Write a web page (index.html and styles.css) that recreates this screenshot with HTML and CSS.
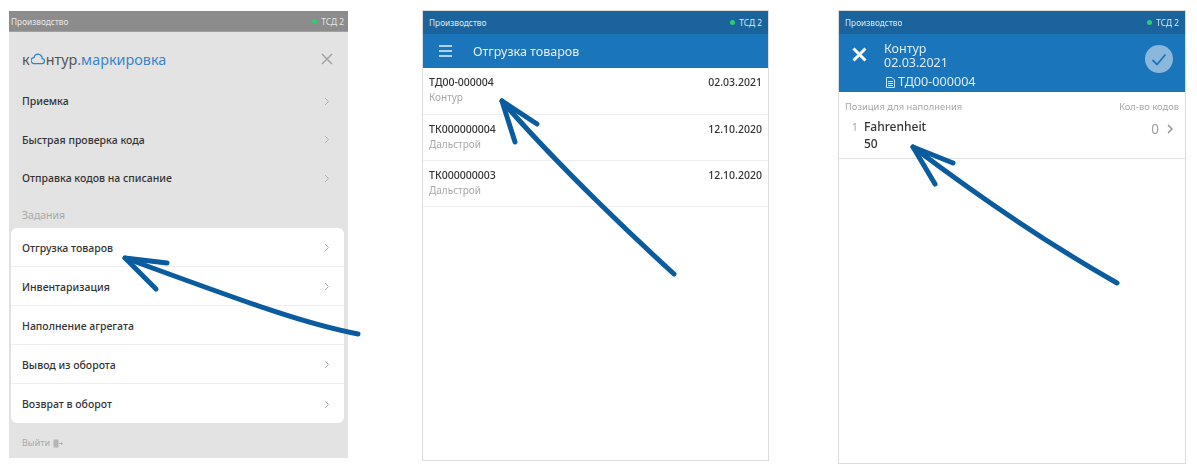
FILE: index.html
```html
<!DOCTYPE html>
<html lang="ru">
<head>
<meta charset="utf-8">
<title>Контур.Маркировка</title>
<link rel="stylesheet" href="styles.css">
</head>
<body>
<main class="stage">
  <section class="phone phone-menu">
    <div class="status status-gray"><span>Производство</span><span class="device"><i class="dot"></i>ТСД 2</span></div>
    <header class="brand">
      <div class="logo"><span>к</span><svg class="cloud" width="14" height="12" viewBox="0 0 14 12"><path d="M3.2 10.6h7.6a2.5 2.5 0 0 0 .4-5A4.3 4.3 0 0 0 7 1.2 4.2 4.2 0 0 0 3 4.6a3 3 0 0 0 .2 6z" fill="none" stroke="#2f86c9" stroke-width="1.3"/></svg><span>нтур</span><span class="logo-blue">.маркировка</span></div>
      <svg class="close-gray" width="12" height="12" viewBox="0 0 12 12"><path d="M1 1l10 10M11 1L1 11" stroke="#a3a3a3" stroke-width="1.5" fill="none"/></svg>
    </header>
    <ul class="menu">
      <li class="menu-row">Приемка<svg class="chev" width="6" height="9" viewBox="0 0 6 9"><path d="M1 1l3.5 3.5L1 8"/></svg></li>
      <li class="menu-row">Быстрая проверка кода<svg class="chev" width="6" height="9" viewBox="0 0 6 9"><path d="M1 1l3.5 3.5L1 8"/></svg></li>
      <li class="menu-row">Отправка кодов на списание<svg class="chev" width="6" height="9" viewBox="0 0 6 9"><path d="M1 1l3.5 3.5L1 8"/></svg></li>
    </ul>
    <div class="section-title">Задания</div>
    <ul class="card">
      <li class="card-row">Отгрузка товаров<svg class="chev" width="6" height="9" viewBox="0 0 6 9"><path d="M1 1l3.5 3.5L1 8"/></svg></li>
      <li class="card-row">Инвентаризация<svg class="chev" width="6" height="9" viewBox="0 0 6 9"><path d="M1 1l3.5 3.5L1 8"/></svg></li>
      <li class="card-row">Наполнение агрегата</li>
      <li class="card-row">Вывод из оборота<svg class="chev" width="6" height="9" viewBox="0 0 6 9"><path d="M1 1l3.5 3.5L1 8"/></svg></li>
      <li class="card-row">Возврат в оборот<svg class="chev" width="6" height="9" viewBox="0 0 6 9"><path d="M1 1l3.5 3.5L1 8"/></svg></li>
    </ul>
    <div class="logout">Выйти<svg width="10" height="9" viewBox="0 0 10 9"><path d="M0.5 0.5h5v8h-5z" fill="#b5b5b5"/><path d="M6 4.5H9.5M8 3l1.5 1.5L8 6" stroke="#b5b5b5" fill="none"/></svg></div>
  </section>

  <section class="phone phone-list">
    <div class="status status-blue"><span>Производство</span><span class="device"><i class="dot"></i>ТСД 2</span></div>
    <header class="appbar">
      <svg class="burger" width="13" height="12" viewBox="0 0 13 12"><path d="M0 1h13M0 6h13M0 11h13" stroke="#e4eff8" stroke-width="1.6"/></svg>
      <h1 class="appbar-title">Отгрузка товаров</h1>
    </header>
    <ul class="docs">
      <li class="doc"><div class="doc-line"><b>ТД00-000004</b><b>02.03.2021</b></div><div class="doc-sub">Контур</div></li>
      <li class="doc"><div class="doc-line"><b>ТК000000004</b><b>12.10.2020</b></div><div class="doc-sub">Дальстрой</div></li>
      <li class="doc"><div class="doc-line"><b>ТК000000003</b><b>12.10.2020</b></div><div class="doc-sub">Дальстрой</div></li>
    </ul>
  </section>

  <section class="phone phone-detail">
    <div class="status status-blue"><span>Производство</span><span class="device"><i class="dot"></i>ТСД 2</span></div>
    <header class="detail-head">
      <svg class="close-white" width="15" height="15" viewBox="0 0 15 15"><path d="M1.5 1.5l12 12M13.5 1.5l-12 12" stroke="#fff" stroke-width="3" fill="none"/></svg>
      <div class="detail-info">
        <div>Контур</div>
        <div>02.03.2021</div>
        <div class="detail-doc"><svg width="9" height="11" viewBox="0 0 9 11"><path d="M0.5 0.5h5.5l2.5 2.5v7.5h-8z" fill="none" stroke="#cfe2f2"/><path d="M2 4.5h5M2 6.5h5M2 8.5h5" stroke="#cfe2f2"/></svg>ТД00-000004</div>
      </div>
      <div class="confirm"><svg width="16" height="13" viewBox="0 0 16 13"><path d="M1.5 7l4.5 4.5L14.5 1.5" fill="none" stroke="#1b75bb" stroke-width="1.8"/></svg></div>
    </header>
    <div class="columns"><span>Позиция для наполнения</span><span>Кол-во кодов</span></div>
    <div class="position">
      <span class="pos-num">1</span>
      <div class="pos-name"><div>Fahrenheit</div><div>50</div></div>
      <span class="pos-count">0</span>
      <svg class="chev-dark" width="7" height="10" viewBox="0 0 7 10"><path d="M1 1l4 4-4 4"/></svg>
    </div>
  </section>

  <svg class="arrows" width="1197" height="471" viewBox="0 0 1197 471">
    <g fill="none" stroke="#0b5c9e" stroke-width="5" stroke-linecap="round" stroke-linejoin="round">
      <path d="M358 334C300 323 235 298 125 258"/>
      <path d="M167 263L125 258L156 289"/>
      <path d="M674 274C640 243 560 168 502 101"/>
      <path d="M537 124L502 101L515 142"/>
      <path d="M1117 283C1050 245 990 205 913 147"/>
      <path d="M953 163L913 147L935 184"/>
    </g>
  </svg>
</main>
</body>
</html>
```
FILE: styles.css
```css
* { box-sizing: border-box; }
html, body { margin: 0; padding: 0; background: #fff; }
body { font-family: "Noto Sans", "Open Sans", sans-serif; color: #333; }
ul { list-style: none; margin: 0; padding: 0; }
h1 { margin: 0; font: inherit; }

.stage {
  position: relative;
  display: flex;
  align-items: flex-start;
  width: 1197px;
  height: 471px;
  padding: 10px 0 0 9px;
  overflow: hidden;
  filter: blur(0.35px);
}
.arrows { position: absolute; left: 0; top: 0; pointer-events: none; }

.phone { display: flex; flex-direction: column; }
.phone-menu { width: 339px; height: 447px; margin-top: 1px; background: #e3e3e3; }
.phone-list { width: 347px; height: 451px; margin-left: 74px; border: 1px solid #dcdcdc; background: #fff; }
.phone-detail { width: 348px; height: 454px; margin-left: 69px; border: 1px solid #dcdcdc; background: #fff; }

.status {
  display: flex;
  justify-content: space-between;
  align-items: center;
  flex: none;
  font-size: 8.3px;
}
.status-gray { height: 21px; padding: 0 4px 0 2px; background: #8c8c8c; color: #e6e6e6; border-bottom: 1px solid #a0a0a0; }
.status-blue { height: 23px; padding: 0 6px; background: #1a639c; color: #dce9f4; }
.device { display: flex; align-items: center; gap: 4px; }
.dot { width: 5px; height: 5px; border-radius: 50%; background: #2ecc71; }

.brand {
  display: flex;
  justify-content: space-between;
  align-items: center;
  flex: none;
  height: 50px;
  padding: 4px 15px 0 13px;
}
.logo { display: flex; align-items: center; font-size: 14.4px; color: #555; }
.logo-blue { color: #3a86c6; }
.cloud { margin: -1px 1px 0 1px; }
.close-gray { flex: none; }

.menu-row, .card-row {
  display: flex;
  justify-content: space-between;
  align-items: center;
  font-size: 10.5px;
  font-weight: 500;
  color: #333;
}
.menu-row { height: 38.5px; padding: 0 18px 0 13px; }
.section-title { margin-top: 10.5px; height: 20px; padding-left: 13px; font-size: 10.5px; line-height: 14px; color: #a8a8a8; }
.card { margin: 0 4px 0 2px; background: #fff; border-radius: 6px; }
.card-row { height: 39px; padding: 1px 14px 0 11px; border-bottom: 1px solid #efefef; }
.card-row:last-child { border-bottom: 0; }
.chev { flex: none; fill: none; stroke: #b0b0b0; stroke-width: 1; }
.logout { display: flex; align-items: center; gap: 3px; margin-top: 14px; padding-left: 13px; font-size: 9px; line-height: 12px; color: #a8a8a8; }

.appbar { display: flex; align-items: center; flex: none; height: 34px; padding-left: 16px; background: #1b75bb; }
.appbar-title { margin-left: 21px; font-size: 12.5px; color: #e4eff8; }
.doc { height: 46px; padding: 7px 6px 0 6px; border-bottom: 1px solid #eee; }
.doc:first-child { height: 47px; }
.doc-line { display: flex; justify-content: space-between; font-size: 10.5px; line-height: 14px; color: #333; }
.doc-line b { font-weight: 500; }
.doc-sub { margin-top: 1px; font-size: 10px; line-height: 14px; color: #a8a8a8; }

.detail-head { display: flex; flex: none; height: 58px; padding: 0 12px 0 13px; background: #1b75bb; color: #dfecf6; font-size: 12.5px; line-height: 14px; }
.close-white { flex: none; margin-top: 13px; }
.detail-info { margin-left: 17px; padding-top: 8px; flex: 1; }
.detail-doc { display: flex; align-items: center; gap: 3px; margin-top: 5px; padding-left: 2px; font-size: 12.6px; }
.confirm { display: flex; align-items: center; justify-content: center; flex: none; width: 28px; height: 28px; margin-top: 11px; border-radius: 50%; background: #8ab7dc; }
.columns { display: flex; justify-content: space-between; flex: none; height: 22px; padding: 8px 6px 0; font-size: 9.4px; line-height: 14px; color: #a8a8a8; }
.position { display: flex; align-items: flex-start; flex: none; height: 45px; padding: 5px 11px 0 13px; border-bottom: 1px solid #e3e3e3; font-size: 12px; line-height: 16.5px; color: #333; font-weight: 500; }
.pos-num { width: 12px; color: #a0a0a0; font-size: 10px; font-weight: 400; }
.pos-name { flex: 1; }
.pos-count { color: #a0a0a0; font-weight: 400; font-size: 13.5px; line-height: 20px; }
.chev-dark { flex: none; margin: 5px 0 0 8px; fill: none; stroke: #909090; stroke-width: 1.4; }
```
